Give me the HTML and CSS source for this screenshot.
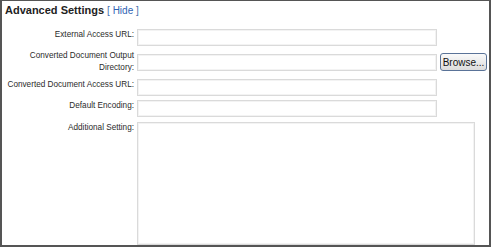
FILE: index.html
```html
<!DOCTYPE html>
<html>
<head>
<meta charset="utf-8">
<link rel="stylesheet" href="styles.css">
</head>
<body>
<div class="frame">
  <div class="title">Advanced Settings <span class="toggle">[ <a class="hide" href="#">Hide</a> ]</span></div>
  <div class="row r1">
    <label class="lbl">External Access URL:</label>
    <input class="field" type="text">
  </div>
  <div class="row r2">
    <label class="lbl two">Converted Document Output<br>Directory:</label>
    <input class="field" type="text">
    <button class="browse" type="button">Browse...</button>
  </div>
  <div class="row r3">
    <label class="lbl">Converted Document Access URL:</label>
    <input class="field" type="text">
  </div>
  <div class="row r4">
    <label class="lbl">Default Encoding:</label>
    <input class="field" type="text">
  </div>
  <div class="row r5">
    <label class="lbl">Additional Setting:</label>
    <textarea class="area"></textarea>
  </div>
</div>
</body>
</html>
```
FILE: styles.css
```css
html, body {
  margin: 0;
  padding: 0;
  background: #fff;
}
.frame {
  box-sizing: border-box;
  width: 491px;
  height: 247px;
  border-style: solid;
  border-color: #555;
  border-width: 1px 2px 2px 2px;
  font-family: "Liberation Sans", Arial, sans-serif;
  display: flex;
  flex-direction: column;
}
.title {
  margin: 2px 0 0 3px;
  font-size: 11px;
  line-height: 14px;
  font-weight: bold;
  color: #222;
}
.toggle {
  font-weight: normal;
  font-size: 10px;
  color: #4670ad;
}
.hide {
  color: #2f64b4;
  text-decoration: none;
}
.row {
  display: flex;
  align-items: flex-start;
  column-gap: 3px;
}
.r1 { margin-top: 11px; }
.r2 { margin-top: 4px; align-items: center; }
.r3 { margin-top: 5px; }
.r4 { margin-top: 4px; }
.r5 { margin-top: 5px; }
.lbl {
  width: 132px;
  flex: none;
  text-align: right;
  font-size: 8.2px;
  line-height: 12px;
  color: #2b2b2b;
}
.field {
  box-sizing: border-box;
  width: 300px;
  height: 17px;
  margin: 0;
  padding: 0 2px;
  border: 1px solid #dadada;
  box-shadow: inset 0 0 0 1px #f3f3f3;
  background: #fff;
  outline: none;
}
.browse {
  box-sizing: border-box;
  width: 47px;
  height: 18px;
  margin: 0;
  padding: 0;
  font-family: "Liberation Sans", Arial, sans-serif;
  font-size: 10px;
  color: #111;
  border: 1px solid #5a7398;
  border-radius: 3px;
  background: linear-gradient(#fafafa, #dcdcdc);
}
.area {
  box-sizing: border-box;
  width: 338px;
  height: 123px;
  margin: 0;
  padding: 2px;
  border: 1px solid #dadada;
  box-shadow: inset 0 0 0 1px #f3f3f3;
  background: #fff;
  resize: none;
  outline: none;
}
```
